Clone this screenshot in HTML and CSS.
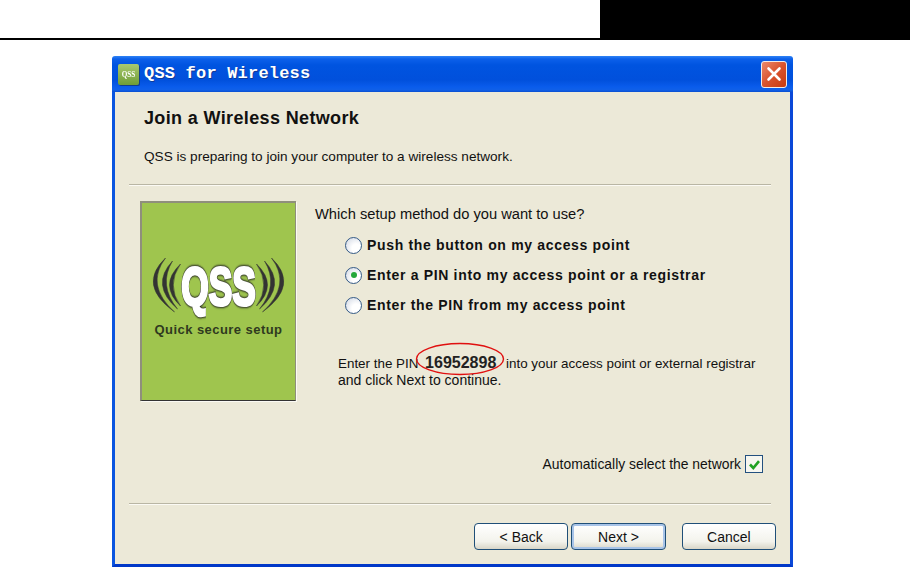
FILE: index.html
```html
<!DOCTYPE html>
<html lang="en">
<head>
<meta charset="utf-8">
<title>QSS for Wireless</title>
<link rel="stylesheet" href="styles.css">
</head>
<body>
<header class="page-head"><div class="page-tab"></div></header>
<main class="window">
  <div class="titlebar">
    <div class="app-icon"><span>QSS</span></div>
    <div class="title">QSS for Wireless</div>
    <div class="close">
      <svg width="18" height="18" viewBox="0 0 18 18"><path d="M3.5 3.5L14.5 14.5M14.5 3.5L3.5 14.5" stroke="#fff" stroke-width="2.6" stroke-linecap="round"/></svg>
    </div>
  </div>
  <div class="client">
    <h1 class="heading">Join a Wireless Network</h1>
    <p class="intro">QSS is preparing to join your computer to a wireless network.</p>
    <hr class="rule rule-top">
    <div class="body-row">
      <div class="brand">
        <svg class="brand-art" width="150" height="110" viewBox="0 0 150 110">
          <g class="brand-waves">
            <path d="M21.5 4Q-7 31 30.5 58Q1 31 21.5 4Z"/>
            <path d="M28.5 7Q6 31 33.5 55Q14 31 28.5 7Z"/>
            <path d="M36.5 10Q14.5 31 36.5 52Q22 31 36.5 10Z"/>
            <path d="M127.5 4Q156 31 118.5 58Q148 31 127.5 4Z"/>
            <path d="M120.5 7Q143 31 115.5 55Q135 31 120.5 7Z"/>
            <path d="M112.5 10Q134.5 31 112.5 52Q127 31 112.5 10Z"/>
          </g>
          <text class="brand-qss" transform="translate(74.5 51) scale(0.93 1.4)" text-anchor="middle">QSS</text>
        </svg>
        <div class="brand-caption">Quick secure setup</div>
      </div>
      <div class="options">
        <p class="question">Which setup method do you want to use?</p>
        <div class="radio-row"><span class="radio"></span><span class="radio-label">Push the button on my access point</span></div>
        <div class="radio-row"><span class="radio radio-on"></span><span class="radio-label">Enter a PIN into my access point or a registrar</span></div>
        <div class="radio-row"><span class="radio"></span><span class="radio-label">Enter the PIN from my access point</span></div>
        <p class="pin-text">Enter the PIN <b class="pin-wrap">16952898<svg class="pin-mark" width="92" height="34" viewBox="0 0 92 34"><ellipse cx="45" cy="17" rx="43.5" ry="15.5" fill="none" stroke="#e01010" stroke-width="1.4"/></svg></b> into your access point or external registrar<br><span class="pin-next">and click Next to continue.</span></p>
      </div>
    </div>
    <div class="auto-row">
      <span>Automatically select the network</span>
      <span class="check"><svg width="13" height="13" viewBox="0 0 13 13"><path d="M2 6.5L5.3 10L11 3.2" fill="none" stroke="#21a121" stroke-width="2.6"/></svg></span>
    </div>
    <hr class="rule rule-bottom">
    <div class="buttons">
      <button class="btn">&lt; Back</button>
      <button class="btn btn-default">Next &gt;</button>
      <button class="btn btn-cancel">Cancel</button>
    </div>
  </div>
</main>
</body>
</html>
```
FILE: styles.css
```css
* { box-sizing: border-box; }
html, body { margin: 0; padding: 0; }
body {
  width: 910px;
  height: 567px;
  overflow: hidden;
  background: #fff;
  font-family: "Liberation Sans", Arial, sans-serif;
  color: #111;
}
.page-head {
  height: 40px;
  border-bottom: 2px solid #000;
  display: flex;
  justify-content: flex-end;
}
.page-tab { width: 310px; height: 38px; background: #000; }

.window {
  width: 681px;
  height: 511px;
  margin: 16px 0 0 112px;
  display: flex;
  flex-direction: column;
  border-radius: 3px 3px 0 0;
  overflow: hidden;
}
.titlebar {
  height: 36px;
  flex: none;
  display: flex;
  align-items: center;
  padding: 0 6px;
  background: linear-gradient(#2f83f5 0, #0c60ea 3px, #0054e0 9px, #0150dc 24px, #0a5cec 31px, #1060e8 34px, #0a4fd0 36px);
}
.app-icon {
  width: 21px;
  height: 21px;
  margin-right: 5px;
  display: flex;
  align-items: center;
  justify-content: center;
  border-radius: 2px;
  background: linear-gradient(#a9c96f, #6f9d36);
  box-shadow: 1px 1px 0 #123c8c;
}
.app-icon span {
  font: bold 8px "Liberation Serif", serif;
  color: #fff;
  transform: scaleX(.9);
}
.title {
  flex: 1;
  font: bold 17px/20px "Liberation Mono", monospace;
  color: #fff;
  letter-spacing: .2px;
  text-shadow: 1px 1px 0 #0f3a99;
}
.close {
  width: 26px;
  height: 27px;
  display: flex;
  align-items: center;
  justify-content: center;
  border: 1px solid #f2ece8;
  border-radius: 3px;
  background: linear-gradient(135deg, #ea8a6c, #d9532e 50%, #c73a10);
}
.client {
  flex: 1;
  display: flex;
  flex-direction: column;
  background: #ece9d8;
  border-left: 3px solid #0a55e0;
  border-right: 3px solid #0a48d8;
  border-bottom: 3px solid #0038c8;
  padding-left: 14px;
  padding-right: 14px;
}
.heading {
  margin: 16px 0 0 15px;
  font-size: 18px;
  line-height: 20px;
  font-weight: bold;
  letter-spacing: .36px;
}
.intro {
  margin: 21px 0 0 15px;
  font-size: 13.6px;
  line-height: 16px;
}
.rule {
  width: 642px;
  height: 2px;
  margin: 0;
  border: 0;
  border-top: 1px solid #b9b6a4;
  border-bottom: 1px solid #fbfaf4;
}
.rule-top { margin-top: 19px; }
.body-row {
  display: flex;
  margin: 15px 0 0 11px;
  height: 200px;
}
.brand {
  width: 156px;
  height: 200px;
  background: #9fc54e;
  border: 1px solid #8f8f7c;
  border-left-width: 2px;
  border-top-width: 2px;
  border-bottom-color: #333;
  box-shadow: 1px 1px 0 #fbfaf4;
  display: flex;
  flex-direction: column;
  align-items: center;
  padding-top: 51px;
}
.brand-art { display: block; }
.brand-waves path {
  fill: #333;
  stroke: #333;
  stroke-width: .5px;
}
.brand-qss {
  font: bold 38px "Liberation Sans", sans-serif;
  fill: #fff;
  stroke: #fff;
  stroke-width: 2.2px;
  filter: drop-shadow(0 0 .8px #222) drop-shadow(0 0 .8px #222);
}
.brand-caption {
  margin-top: -42px;
  font-size: 13px;
  line-height: 16px;
  font-weight: bold;
  letter-spacing: .45px;
  color: #2f3a1f;
}
.options {
  margin-left: 19px;
  flex: 1;
}
.question {
  margin: 5px 0 0;
  font-size: 14.7px;
  line-height: 16px;
}
.radio-row {
  height: 30px;
  display: flex;
  align-items: center;
}
.question + .radio-row { margin-top: 8px; }
.radio {
  width: 17px;
  height: 17px;
  margin-left: 30px;
  margin-right: 5px;
  border-radius: 50%;
  border: 1.5px solid #345a86;
  background: radial-gradient(circle at 70% 70%, #fff 30%, #d5dbe6 90%);
  display: flex;
  align-items: center;
  justify-content: center;
  flex: none;
}
.radio-on::after {
  content: "";
  width: 6px;
  height: 6px;
  border-radius: 50%;
  background: #25a83a;
}
.radio-label {
  font-size: 14px;
  font-weight: bold;
  letter-spacing: .67px;
  white-space: nowrap;
}
.pin-text {
  margin: 35px 0 0 23px;
  font-size: 13.4px;
  line-height: 16px;
  white-space: nowrap;
}
.pin-next { font-size: 14px; }
.pin-wrap {
  position: relative;
  margin: 0 6px 0 3px;
  font-size: 16px;
  color: #222;
}
.pin-mark {
  position: absolute;
  left: -10px;
  top: -12px;
}
.auto-row {
  display: flex;
  justify-content: flex-end;
  align-items: center;
  gap: 4px;
  margin: 54px 0 0;
  width: 634px;
  height: 18px;
  font-size: 13.9px;
}
.check {
  width: 18px;
  height: 18px;
  border: 1px solid #23507f;
  background: #f6f6ef;
  display: flex;
  align-items: center;
  justify-content: center;
}
.rule-bottom { margin-top: 30px; }
.buttons {
  display: flex;
  margin: 18px 0 0 345px;
  gap: 3px;
}
.btn {
  width: 95px;
  height: 27px;
  padding: 0;
  border: 1px solid #1f4f78;
  border-radius: 4px;
  background: linear-gradient(#ffffff, #f3f3ec 70%, #d9d6c8);
  font: 14px "Liberation Sans", Arial, sans-serif;
  color: #111;
}
.btn-default { box-shadow: inset 0 0 0 2px #a8c4e8; }
.btn-cancel { margin-left: 13px; }
```
